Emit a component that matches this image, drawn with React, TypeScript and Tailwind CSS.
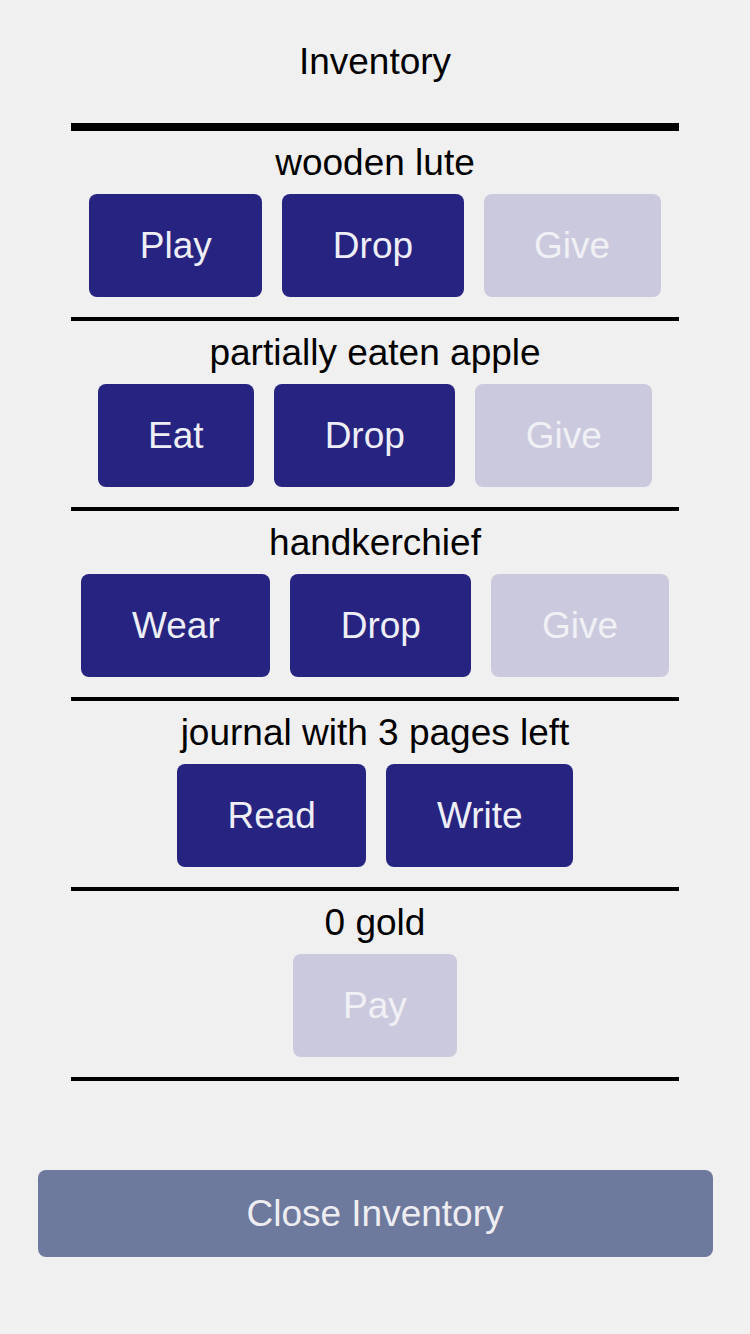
const items = [
  { name: "wooden lute", actions: [["Play", true], ["Drop", true], ["Give", false]] },
  { name: "partially eaten apple", actions: [["Eat", true], ["Drop", true], ["Give", false]] },
  { name: "handkerchief", actions: [["Wear", true], ["Drop", true], ["Give", false]] },
  { name: "journal with 3 pages left", actions: [["Read", true], ["Write", true]] },
  { name: "0 gold", actions: [["Pay", false]] },
] as const;

const App = () => {
  return (
    <div className="min-h-[1334px] bg-[#f0f0f0] text-black font-['Liberation_Sans',Arial,sans-serif] text-[37px] leading-[43px] pt-[40px]">
      <div className="w-[90%] mx-auto flex flex-col">
        <h1 className="text-center font-normal">Inventory</h1>

        <div className="w-[90%] mx-auto mt-[40px] border-t-[8px] border-black">
          {items.map((item) => (
            <div key={item.name} className="border-b-[4px] border-black pt-[10px] pb-[10px] flex flex-col items-center">
              <div className="text-center">{item.name}</div>
              <div className="flex justify-center">
                {item.actions.map(([label, enabled]) => (
                  <button
                    key={label}
                    disabled={!enabled}
                    className={
                      enabled
                        ? "m-[10px] px-[50.5px] py-[30px] rounded-[8px] bg-[#262480] text-[#eeeef6]"
                        : "m-[10px] px-[50.5px] py-[30px] rounded-[8px] bg-[#cbc9de] text-[#f0f0f5]"
                    }
                  >
                    {label}
                  </button>
                ))}
              </div>
            </div>
          ))}
        </div>

        <button className="mt-[89px] w-full py-[22px] rounded-[8px] bg-[#6e7a9d] text-[#eeeef2]">
          Close Inventory
        </button>
      </div>
    </div>
  );
};

export default App;
